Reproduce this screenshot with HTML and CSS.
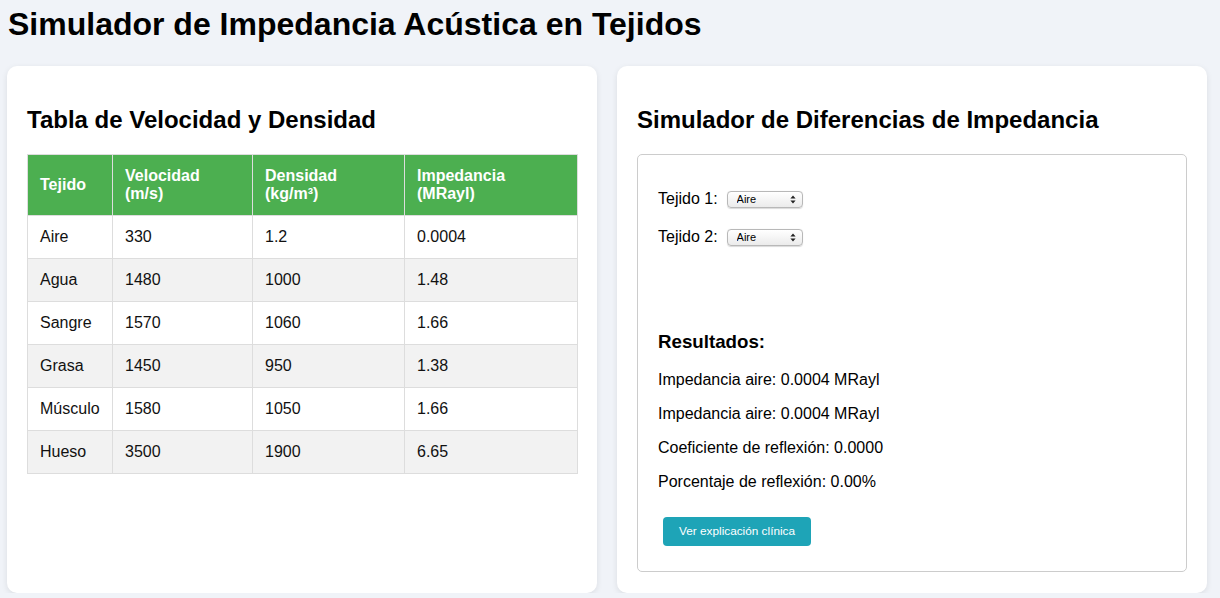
FILE: index.html
```html
<!DOCTYPE html>
<html lang="es">
<head>
<meta charset="utf-8">
<title>Simulador de Impedancia Acústica en Tejidos</title>
<link rel="stylesheet" href="styles.css">
</head>
<body>
<div class="page">
  <h1 class="title">Simulador de Impedancia Acústica en Tejidos</h1>
  <div class="grid">
    <section class="card">
      <h2 class="card-title">Tabla de Velocidad y Densidad</h2>
      <table class="tissue-table">
        <colgroup>
          <col class="c1"><col class="c2"><col class="c3"><col class="c4">
        </colgroup>
        <thead>
          <tr><th>Tejido</th><th>Velocidad<br>(m/s)</th><th>Densidad<br>(kg/m³)</th><th>Impedancia<br>(MRayl)</th></tr>
        </thead>
        <tbody>
          <tr><td>Aire</td><td>330</td><td>1.2</td><td>0.0004</td></tr>
          <tr><td>Agua</td><td>1480</td><td>1000</td><td>1.48</td></tr>
          <tr><td>Sangre</td><td>1570</td><td>1060</td><td>1.66</td></tr>
          <tr><td>Grasa</td><td>1450</td><td>950</td><td>1.38</td></tr>
          <tr><td>Músculo</td><td>1580</td><td>1050</td><td>1.66</td></tr>
          <tr><td>Hueso</td><td>3500</td><td>1900</td><td>6.65</td></tr>
        </tbody>
      </table>
    </section>
    <section class="card">
      <h2 class="card-title">Simulador de Diferencias de Impedancia</h2>
      <div class="sim-box">
        <div class="ctrl first">
          <label for="t1">Tejido 1:</label>
          <span class="select-wrap">
            <select id="t1" class="select"><option>Aire</option><option>Agua</option><option>Sangre</option><option>Grasa</option><option>Músculo</option><option>Hueso</option></select>
            <svg class="arrows" width="6" height="9" viewBox="0 0 6 9"><path d="M3 0.5L5.6 3.6H0.4Z M3 8.5L5.6 5.4H0.4Z" fill="#222"/></svg>
          </span>
        </div>
        <div class="ctrl">
          <label for="t2">Tejido 2:</label>
          <span class="select-wrap">
            <select id="t2" class="select"><option>Aire</option><option>Agua</option><option>Sangre</option><option>Grasa</option><option>Músculo</option><option>Hueso</option></select>
            <svg class="arrows" width="6" height="9" viewBox="0 0 6 9"><path d="M3 0.5L5.6 3.6H0.4Z M3 8.5L5.6 5.4H0.4Z" fill="#222"/></svg>
          </span>
        </div>
        <div class="viz"></div>
        <h3 class="results-title">Resultados:</h3>
        <p class="result">Impedancia aire: 0.0004 MRayl</p>
        <p class="result">Impedancia aire: 0.0004 MRayl</p>
        <p class="result">Coeficiente de reflexión: 0.0000</p>
        <p class="result">Porcentaje de reflexión: 0.00%</p>
        <div class="actions">
          <button class="btn" type="button">Ver explicación clínica</button>
        </div>
      </div>
    </section>
  </div>
</div>
</body>
</html>
```
FILE: styles.css
```css
html, body {
  margin: 0;
  padding: 0;
}
body {
  background: #f0f3f8;
  font-family: "Liberation Sans", Arial, Helvetica, sans-serif;
  color: #000;
  font-size: 16px;
}
.page {
  padding: 6px 0 0 7px;
}
.title {
  font-size: 32px;
  font-weight: bold;
  margin: 0 0 23px 1px;
  line-height: normal;
}
.grid {
  display: grid;
  grid-template-columns: 590px 590px;
  column-gap: 20px;
  align-items: stretch;
}
.card {
  background: #fff;
  border-radius: 10px;
  box-shadow: 0 2px 6px rgba(0, 0, 0, 0.09);
  padding: 20px 20px 21px;
}
.card-title {
  font-size: 24px;
  font-weight: bold;
  margin: 20px 0 20px;
  line-height: normal;
}
.tissue-table {
  width: 100%;
  border-collapse: collapse;
  table-layout: fixed;
}
.c1 { width: 85px; }
.c2 { width: 140px; }
.c3 { width: 152px; }
.c4 { width: 173px; }
.tissue-table th,
.tissue-table td {
  border: 1px solid #ddd;
  padding: 12px;
  text-align: left;
  line-height: 18px;
}
.tissue-table th {
  background: #4caf50;
  color: #fff;
  font-weight: bold;
  font-size: 16px;
  vertical-align: middle;
}
.tissue-table td {
  font-size: 16px;
  color: #111;
}
.tissue-table tbody tr:nth-child(even) td {
  background: #f2f2f2;
}
.sim-box {
  border: 1px solid #ccc;
  border-radius: 5px;
  padding: 20px;
}
.ctrl {
  display: flex;
  align-items: center;
  height: 24px;
  margin-bottom: 14px;
}
.ctrl.first {
  margin-top: 12px;
}
.ctrl label {
  font-size: 16px;
  margin-right: 9px;
}
.select-wrap {
  position: relative;
  display: inline-flex;
}
.select {
  appearance: none;
  -webkit-appearance: none;
  width: 76px;
  height: 17px;
  padding: 0 0 0 9px;
  border: 1px solid #b8b8b8;
  border-radius: 4px;
  background: linear-gradient(#ffffff, #ebebeb);
  font-family: "Liberation Sans", Arial, sans-serif;
  font-size: 11px;
  line-height: 15px;
  color: #000;
  box-shadow: 0 0.5px 1px rgba(0, 0, 0, 0.15);
}
.arrows {
  position: absolute;
  right: 7px;
  top: 4px;
  pointer-events: none;
}
.viz {
  height: 49px;
}
.results-title {
  font-size: 18.72px;
  font-weight: bold;
  margin: 18.72px 0;
}
.result {
  margin: 16px 0;
  font-size: 16px;
}
.actions {
  display: flex;
}
.btn {
  margin: 10px 5px 5px;
  padding: 8px 16px;
  border: none;
  border-radius: 4px;
  background: #1ea4b7;
  color: #fff;
  font-family: "Liberation Sans", Arial, sans-serif;
  font-size: 11.8px;
  line-height: 13px;
}
```
